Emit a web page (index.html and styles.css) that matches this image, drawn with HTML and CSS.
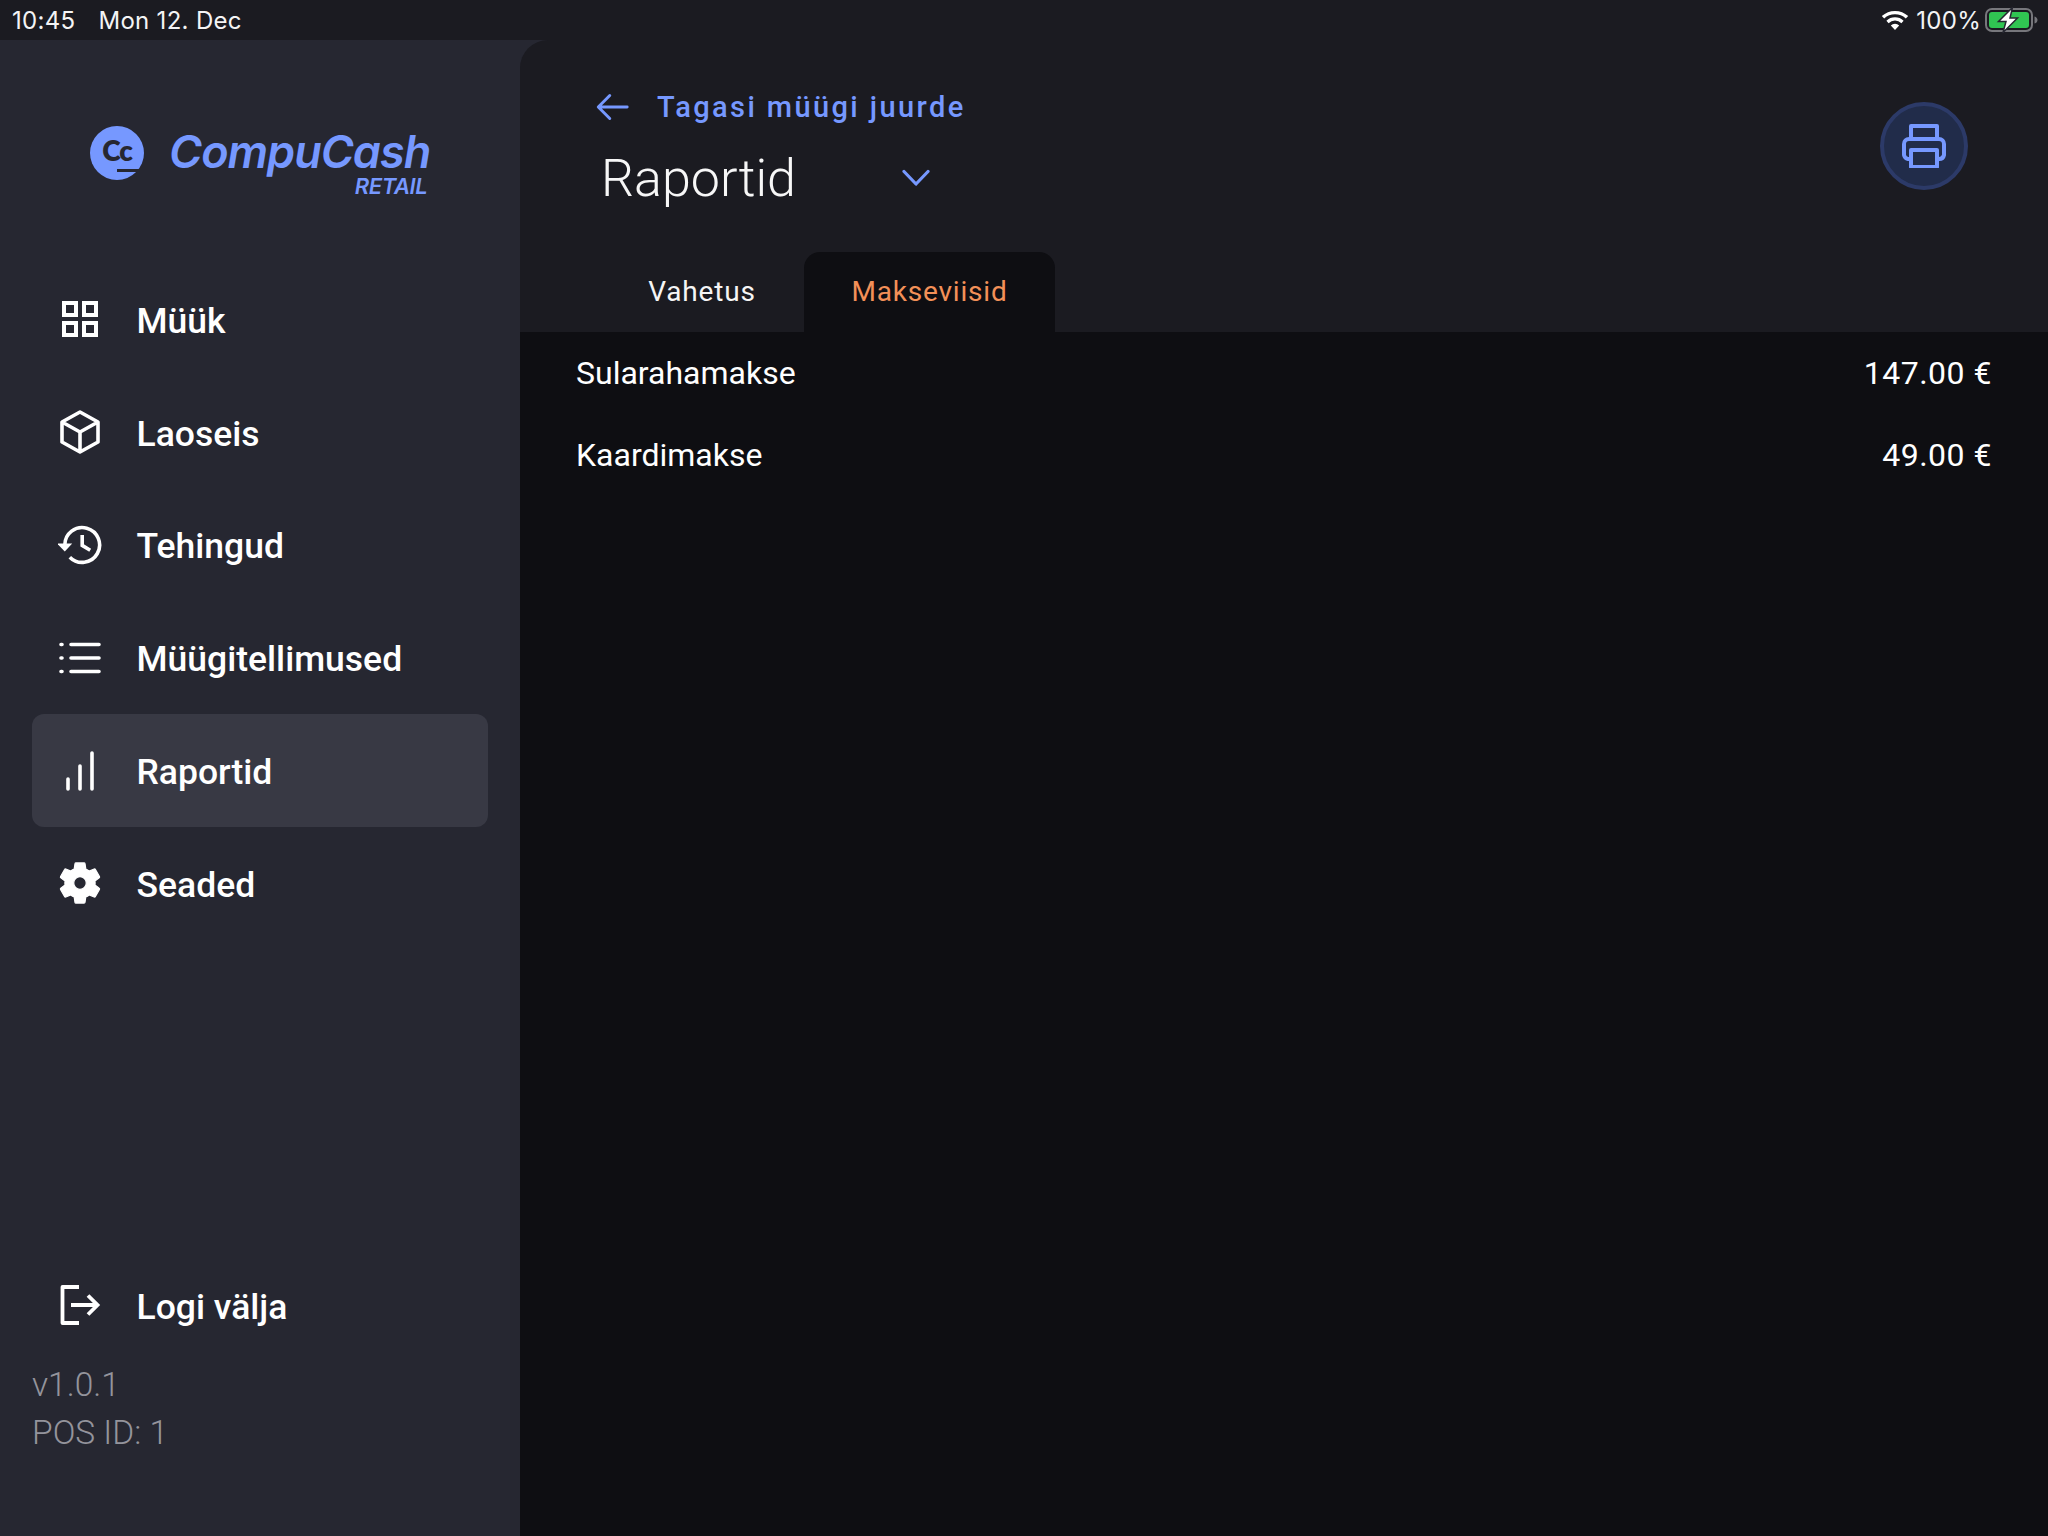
FILE: index.html
```html
<!DOCTYPE html>
<html lang="et">
<head>
<meta charset="utf-8">
<title>Raportid</title>
<link rel="stylesheet" href="styles.css">
</head>
<body>
<div class="statusbar">
  <div class="status-left"><span>10:45</span><span>Mon 12. Dec</span></div>
  <div class="status-right">
    <svg class="wifi" viewBox="0 0 28 20"><path d="M14 20l-4.200-4.600a6 6 0 0 1 8.400 0zM7.600 13.200L5.400 10.800a12.400 12.400 0 0 1 17.200 0l-2.200 2.400a9.200 9.200 0 0 0-12.800 0zM3.200 8.500L.8 6a19.600 19.600 0 0 1 26.400 0l-2.400 2.500a16.200 16.200 0 0 0-21.600 0z"/></svg>
    <span class="percent">100%</span>
    <svg class="battery" viewBox="0 0 54 26"><rect x="1" y="2" width="46" height="22" rx="6" fill="none" stroke="#77777c" stroke-width="2"/><rect x="4" y="5" width="40" height="16" rx="3" fill="#30c552"/><path d="M49.500 9.500c2 .5 3 2 3 3.500s-1 3-3 3.500z" fill="#77777c"/><path d="M27.500 .5L13.500 14.500h7.500L18 25.500 32.500 11h-7.500z" fill="#fff" stroke="#262731" stroke-width="1.500"/></svg>
  </div>
</div>
<div class="app">
  <aside class="sidebar">
    <div class="logo">
      <div class="logo-mark"><span class="logo-cc">Cc</span><i class="logo-dash"></i></div>
      <div class="logo-words"><span class="logo-name">CompuCash</span><span class="logo-sub">RETAIL</span></div>
    </div>
    <nav class="nav">
      <a class="nav-item"><svg class="nav-icon" viewBox="0 0 44 44"><path d="M6 6h12v12H6zM26 6h12v12H26zM6 26h12v12H6zM26 26h12v12H26z" fill="none" stroke="currentColor" stroke-width="4"/></svg><span>Müük</span></a>
      <a class="nav-item"><svg class="nav-icon" viewBox="0 0 44 44"><path d="M22 2L40 12V32L22 42 4 32V12zM4 12L22 22 40 12M22 22V42" fill="none" stroke="currentColor" stroke-width="3.600" stroke-linejoin="round"/></svg><span>Laoseis</span></a>
      <a class="nav-item"><svg class="nav-icon" viewBox="1.200 1 22 22"><path d="M4.600 12a8.700 8.700 0 1 1 2.500 6.100M13.300 7v5.200l4 2.400" fill="none" stroke="currentColor" stroke-width="1.800"/><path d="M.8 11.300h7.500l-3.700 4z" fill="currentColor"/></svg><span>Tehingud</span></a>
      <a class="nav-item"><svg class="nav-icon" viewBox="0 0 44 44"><path d="M13 8.500h28M13 22h28M13 35.500h28" fill="none" stroke="currentColor" stroke-width="3.600" stroke-linecap="round"/><path d="M3 8.500h1M3 22h1M3 35.500h1" fill="none" stroke="currentColor" stroke-width="3.600" stroke-linecap="round"/></svg><span>Müügitellimused</span></a>
      <a class="nav-item active"><svg class="nav-icon" viewBox="0 0 44 44"><path d="M10 30v10M22 17v23M34 4v36" fill="none" stroke="currentColor" stroke-width="3.600" stroke-linecap="round"/></svg><span>Raportid</span></a>
      <a class="nav-item"><svg class="nav-icon" viewBox="1.500 1.500 21 21"><path fill="currentColor" stroke="currentColor" stroke-width=".6" d="M19.140 12.940c.04-.3.06-.61.06-.94 0-.32-.02-.64-.07-.94l2.030-1.580a.49.49 0 0 0 .12-.61l-1.920-3.320a.488.488 0 0 0-.59-.22l-2.390.96c-.5-.38-1.030-.7-1.620-.94l-.36-2.540a.484.484 0 0 0-.48-.41h-3.840c-.24 0-.43.17-.47.41l-.36 2.540c-.59.24-1.130.57-1.620.94l-2.390-.96c-.22-.08-.47 0-.59.22L2.740 8.870c-.12.21-.08.47.12.61l2.030 1.580c-.05.3-.09.63-.09.94s.02.64.07.94l-2.030 1.580a.49.49 0 0 0-.12.61l1.920 3.320c.12.22.37.29.59.22l2.390-.96c.5.38 1.030.7 1.620.94l.36 2.540c.05.24.24.41.48.41h3.840c.24 0 .44-.17.47-.41l.36-2.540c.59-.24 1.130-.56 1.620-.94l2.390.96c.22.08.47 0 .59-.22l1.920-3.320c.12-.22.07-.47-.12-.61l-2.010-1.580zM12 15c-1.650 0-3-1.350-3-3s1.350-3 3-3 3 1.350 3 3-1.350 3-3 3z"/></svg><span>Seaded</span></a>
    </nav>
    <div class="sidebar-foot">
      <a class="nav-item"><svg class="nav-icon" viewBox="0 0 44 44"><path d="M21 4H4.500v36H21" fill="none" stroke="currentColor" stroke-width="3.800" stroke-linejoin="round"/><path d="M13 22h26M30 12.500L39.500 22 30 31.500" fill="none" stroke="currentColor" stroke-width="3.800"/></svg><span>Logi välja</span></a>
      <div class="meta">v1.0.1</div>
      <div class="meta">POS ID: 1</div>
    </div>
  </aside>
  <main class="main">
    <header class="header">
      <div class="header-text">
        <a class="back"><svg class="back-icon" viewBox="0 0 36 30"><path d="M34 15H3M15 2.500L2.500 15 15 27.500" fill="none" stroke="currentColor" stroke-width="3.200" stroke-linecap="round" stroke-linejoin="round"/></svg><span>Tagasi müügi juurde</span></a>
        <div class="title-row"><h1>Raportid</h1><svg class="chevron" viewBox="0 0 28 18"><path d="M2 2.500L14 15 26 2.500" fill="none" stroke="currentColor" stroke-width="3.200" stroke-linecap="round" stroke-linejoin="round"/></svg></div>
      </div>
      <button class="print"><svg viewBox="0 0 44 44"><path d="M9 15V2h26v13" fill="none" stroke="currentColor" stroke-width="4" stroke-linejoin="round"/><path d="M9 35H6a5 5 0 0 1-4-4V20a5 5 0 0 1 5-5h30a5 5 0 0 1 5 5v11a5 5 0 0 1-5 4h-2" fill="none" stroke="currentColor" stroke-width="4" stroke-linejoin="round"/><path d="M9 26h26v17H9z" fill="none" stroke="currentColor" stroke-width="4" stroke-linejoin="round"/></svg></button>
    </header>
    <div class="tabs">
      <div class="tab">Vahetus</div>
      <div class="tab selected">Makseviisid</div>
    </div>
    <section class="rows">
      <div class="row"><span>Sularahamakse</span><span class="amount">147.00 €</span></div>
      <div class="row"><span>Kaardimakse</span><span class="amount">49.00 €</span></div>
    </section>
  </main>
</div>
</body>
</html>
```
FILE: styles.css
```css
* { box-sizing: border-box; }
html, body { margin: 0; padding: 0; }
body {
  width: 2048px;
  height: 1536px;
  overflow: hidden;
  background: #1b1b21;
  color: #fff;
  font-family: Roboto, "Noto Sans", sans-serif;
  display: flex;
  flex-direction: column;
}
.statusbar {
  height: 40px;
  flex: none;
  display: flex;
  justify-content: space-between;
  align-items: center;
  padding: 0 9px 0 12px;
  font-family: Inter, sans-serif;
  font-size: 24px;
  letter-spacing: .3px;
  color: #f4f4f5;
}
.status-left { display: flex; gap: 23px; }
.status-right { display: flex; align-items: center; gap: 7px; }
.percent { margin-right: -3px; }
.wifi { width: 28px; height: 20px; fill: #fff; }
.battery { width: 54px; height: 26px; }
.app { flex: 1; display: flex; min-height: 0; background: #262731; }
.sidebar {
  width: 520px;
  flex: none;
  display: flex;
  flex-direction: column;
  padding: 86px 32px 0;
  background: #262731;
}
.logo { display: flex; align-items: flex-start; margin-left: 58px; gap: 25px; height: 137px; }
.logo-mark {
  width: 54px;
  height: 54px;
  border-radius: 50%;
  background: #7698ff;
  position: relative;
  display: flex;
  align-items: center;
  justify-content: center;
}
.logo-cc { color: #262731; font: 800 28px/1 Lato, sans-serif; margin-top: -6px; letter-spacing: -1px; }
.logo-dash { position: absolute; left: 27px; bottom: 8px; width: 23px; height: 3px; background: #262731; }
.logo-words { display: flex; flex-direction: column; align-items: flex-end; margin-top: 1px; }
.logo-name { font: italic 600 45px/49px Inter, sans-serif; color: #7698ff; letter-spacing: -1px; }
.logo-sub { font: italic 600 22px/20px Inter, sans-serif; color: #7698ff; margin: 0 3px 0 0; letter-spacing: -.4px; }
.nav { display: flex; flex-direction: column; gap: 0; }
.nav-item {
  height: 112.800px;
  display: flex;
  align-items: center;
  gap: 34.500px;
  padding-left: 26px;
  border-radius: 12px;
  font-size: 35.500px;
  font-weight: 500;
  color: #fff;
}
.nav-item span { margin-top: 3px; }
.nav-item.active { background: #383944; }
.nav-icon { width: 44px; height: 44px; flex: none; }
.sidebar-foot { margin-top: auto; padding-bottom: 79px; }
.meta { font-size: 33.500px; line-height: 48px; color: #94949c; font-weight: 300; }
.sidebar-foot .nav-item { margin-bottom: 8px; height: 96px; }
.main {
  flex: 1;
  min-width: 0;
  display: flex;
  flex-direction: column;
  background: #1b1b21;
  border-top-left-radius: 28px;
  position: relative;
}
.header { display: flex; justify-content: space-between; padding: 48px 80px 0 76px; height: 212px; }
.back { display: flex; align-items: center; gap: 28px; color: #7698ff; font-size: 29px; font-weight: 500; letter-spacing: 2.400px; height: 38px; }
.back-icon { width: 33px; height: 28px; }
.title-row { display: flex; align-items: center; margin: 19px 0 0 5px; }
h1 { margin: 0; font-size: 52px; font-weight: 300; line-height: 68px; width: 301px; color: #f7f7f7; }
.chevron { width: 28px; height: 18px; color: #7698ff; margin-top: -2px; }
.print {
  width: 88px;
  height: 88px;
  margin-top: 14px;
  padding: 0;
  border-radius: 50%;
  border: 4px solid #2c3a68;
  background: #212c4a;
  color: #7698ff;
  display: flex;
  align-items: center;
  justify-content: center;
}
.print svg { width: 44px; height: 44px; }
.tabs { display: flex; height: 80px; padding-left: 72px; }
.tab {
  width: 212px;
  display: flex;
  align-items: center;
  justify-content: center;
  padding: 0 0 2px 8px;
  font-size: 28px;
  letter-spacing: .8px;
  color: #f5f5f5;
}
.tab.selected {
  width: 251px;
  padding-left: 0;
  background: #0e0e12;
  border-radius: 16px 16px 0 0;
  color: #f39058;
}
.rows { flex: 1; background: #0e0e12; padding: 0 56px; }
.row {
  height: 82px;
  display: flex;
  justify-content: space-between;
  align-items: center;
  font-size: 32px;
  color: #fff;
}
.amount { letter-spacing: .5px; }
```
